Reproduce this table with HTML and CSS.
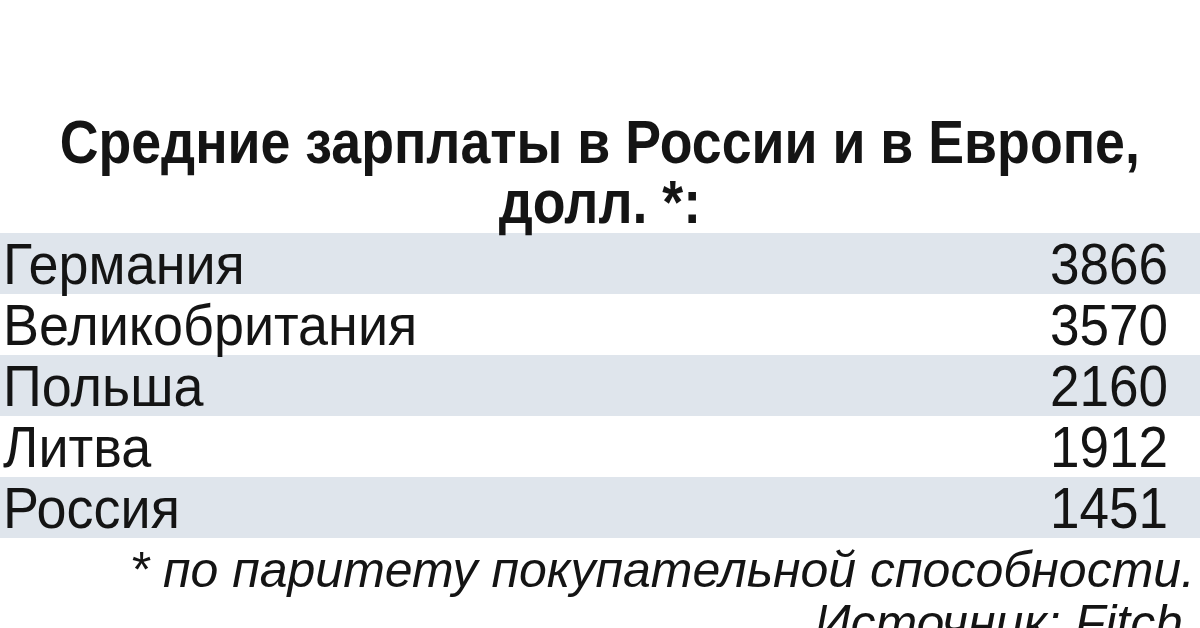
FILE: index.html
```html
<!DOCTYPE html>
<html lang="ru">
<head>
<meta charset="utf-8">
<title>Средние зарплаты в России и в Европе</title>
<link rel="stylesheet" href="styles.css">
</head>
<body>
<div class="page">
  <h1 class="title">
    <span class="title-line">Средние зарплаты в России и в Европе,</span>
    <span class="title-line">долл. *:</span>
  </h1>
  <div class="table">
    <div class="row band"><span class="name">Германия</span><span class="val">3866</span></div>
    <div class="row"><span class="name">Великобритания</span><span class="val">3570</span></div>
    <div class="row band"><span class="name">Польша</span><span class="val">2160</span></div>
    <div class="row"><span class="name">Литва</span><span class="val">1912</span></div>
    <div class="row band"><span class="name">Россия</span><span class="val">1451</span></div>
  </div>
  <div class="note">
    <span class="note-line">* по паритету покупательной способности.</span>
    <span class="note-line source">Источник: Fitch</span>
  </div>
</div>
</body>
</html>
```

FILE: styles.css
```css
html, body {
  margin: 0;
  padding: 0;
  background: #ffffff;
}
.page {
  width: 1200px;
  height: 628px;
  overflow: hidden;
  font-family: "Liberation Sans", Arial, sans-serif;
  color: #141414;
}
.title {
  margin: 0 0 1px 0;
  padding-top: 112px;
  font-size: 61px;
  line-height: 60px;
  font-weight: bold;
  display: flex;
  flex-direction: column;
  align-items: center;
}
.title-line {
  display: block;
  white-space: nowrap;
  transform: scaleX(0.88);
}
.table {
  display: flex;
  flex-direction: column;
}
.row {
  display: flex;
  justify-content: space-between;
  align-items: center;
  height: 61px;
  font-size: 58px;
  line-height: 61px;
  padding: 0 32px 0 3px;
}
.name {
  white-space: nowrap;
  transform: scaleX(0.93);
  transform-origin: left center;
}
.val {
  white-space: nowrap;
  transform: scaleX(0.915);
  transform-origin: right center;
}
.band {
  background: #dfe5ec;
}
.note {
  margin-top: 6px;
  display: flex;
  flex-direction: column;
  align-items: flex-end;
  padding-right: 5px;
  font-style: italic;
  font-size: 50px;
  line-height: 53px;
}
.note-line {
  white-space: nowrap;
}
.source {
  margin-right: 12px;
}
```
